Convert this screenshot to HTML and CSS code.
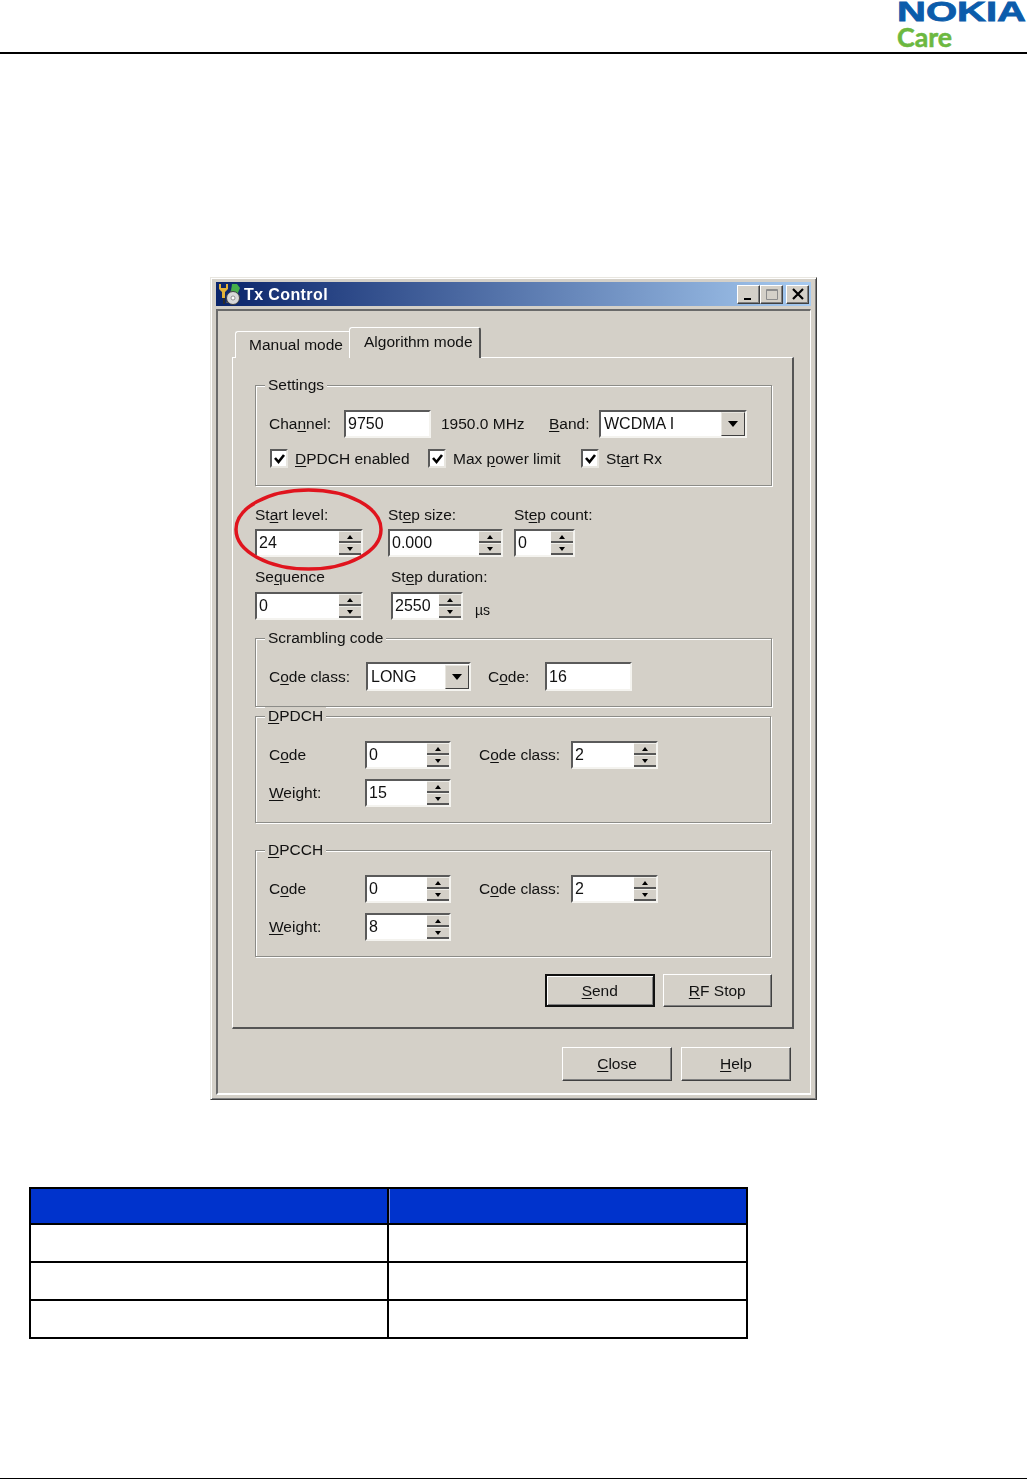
FILE: index.html
```html
<!DOCTYPE html>
<html lang="en">
<head>
    <meta charset="UTF-8">
    <meta name="viewport" content="width=device-width, initial-scale=1.0">
    <title>Tx Control</title>
    <link rel="stylesheet" href="styles.css">
</head>
<body>
    <header class="top">
        <svg class="logo" width="129" height="50" viewBox="0 0 129 50">
            <text class="logo-nokia" x="0" y="21" textLength="129" lengthAdjust="spacingAndGlyphs">NOKIA</text>
            <text class="logo-care" x="0" y="47" textLength="55" lengthAdjust="spacingAndGlyphs">Care</text>
        </svg>
    </header>

    <main class="window">
        <div class="titlebar">
            <svg class="app-icon" width="24" height="24" viewBox="0 0 24 24">
                <path d="M8 21L14 5l6 2-3 14z" fill="#5a5a5a"/>
                <path d="M14 2h5l3 4-3 7-6-3z" fill="#46b04a"/>
                <path d="M1 2v5l3 3v6h3v-6l3-3V2H8v4H3V2z" fill="#e2b23a"/>
                <path d="M5 16h2v6H5z" fill="#2c2c2c"/>
                <circle cx="15" cy="16" r="6.500" fill="#d8d8d8" stroke="#404040"/>
                <circle cx="15" cy="16" r="2" fill="#fff" stroke="#707070" stroke-width="0.700"/>
            </svg>
            <span class="title">Tx Control</span>
            <div class="caption-buttons">
                <span class="cap-btn"><svg width="12" height="12" viewBox="0 0 12 12"><path d="M1 10h7v2H1z"/></svg></span>
                <span class="cap-btn cap-max"><svg width="14" height="12" viewBox="0 0 14 12"><path d="M1.5 1.500h11v10h-11zM1.500 2.500h11" fill="none" stroke="#8c8c8c"/></svg></span>
                <span class="cap-btn cap-close"><svg width="12" height="12" viewBox="0 0 12 12"><path d="M1 1l10 10M11 1L1 11" stroke="#000" stroke-width="2.200"/></svg></span>
            </div>
        </div>

        <div class="client">
            <div class="tabs">
                <span class="tab">Manual mode</span>
                <span class="tab tab-active">Algorithm mode</span>
            </div>

            <div class="tab-page">
                <section class="group">
                    <div class="legend">Settings</div>
                    <div class="row row-first">
                        <span class="lbl lbl-channel">Cha<u>n</u>nel:</span>
                        <span class="edit edit-channel"><span class="val">9750</span></span>
                        <span class="lbl lbl-mhz">1950.0 MHz</span>
                        <span class="lbl lbl-band"><u>B</u>and:</span>
                        <span class="edit combo combo-band"><span class="val">WCDMA I</span><span class="drop"></span></span>
                    </div>
                    <div class="checks">
                        <span class="check check-dpdch"><span class="box"><svg width="13" height="12" viewBox="0 0 13 12"><path d="M2 5l3.500 4L11 2" fill="none" stroke="#000" stroke-width="2.600"/></svg></span><span><u>D</u>PDCH enabled</span></span>
                        <span class="check check-power"><span class="box"><svg width="13" height="12" viewBox="0 0 13 12"><path d="M2 5l3.500 4L11 2" fill="none" stroke="#000" stroke-width="2.600"/></svg></span><span>Max <u>p</u>ower limit</span></span>
                        <span class="check"><span class="box"><svg width="13" height="12" viewBox="0 0 13 12"><path d="M2 5l3.500 4L11 2" fill="none" stroke="#000" stroke-width="2.600"/></svg></span><span>St<u>a</u>rt Rx</span></span>
                    </div>
                </section>

                <div class="fields fields-start">
                    <div class="field field-start">
                        <span class="lbl">St<u>a</u>rt level:</span>
                        <div class="edit spin spin-lg"><span class="val">24</span><span class="arrows"><i class="up"></i><i class="down"></i></span></div>
                        <svg class="ring" width="149" height="83" viewBox="0 0 149 83"><ellipse cx="74.500" cy="41.500" rx="72.500" ry="39.500" fill="none" stroke="#e0141e" stroke-width="3.500"/></svg>
                    </div>
                    <div class="field field-size">
                        <span class="lbl">St<u>e</u>p size:</span>
                        <div class="edit spin spin-md"><span class="val">0.000</span><span class="arrows"><i class="up"></i><i class="down"></i></span></div>
                    </div>
                    <div class="field field-count">
                        <span class="lbl">St<u>e</u>p count:</span>
                        <div class="edit spin spin-sm"><span class="val">0</span><span class="arrows"><i class="up"></i><i class="down"></i></span></div>
                    </div>
                </div>

                <div class="fields fields-seq">
                    <div class="field field-seq">
                        <span class="lbl">Se<u>q</u>uence</span>
                        <div class="edit spin spin-lg"><span class="val">0</span><span class="arrows"><i class="up"></i><i class="down"></i></span></div>
                    </div>
                    <div class="field field-dur">
                        <span class="lbl">St<u>e</u>p duration:</span>
                        <div class="edit spin spin-dur"><span class="val">2550</span><span class="arrows"><i class="up"></i><i class="down"></i></span></div>
                    </div>
                    <span class="lbl lbl-unit">µs</span>
                </div>

                <section class="group group-scrambling">
                    <div class="legend">Scrambling code</div>
                    <div class="row row-scrambling">
                        <span class="lbl lbl-class">C<u>o</u>de class:</span>
                        <span class="edit combo combo-class"><span class="val">LONG</span><span class="drop"></span></span>
                        <span class="lbl lbl-code">C<u>o</u>de:</span>
                        <span class="edit edit-channel"><span class="val">16</span></span>
                    </div>
                </section>

                <section class="group group-channel">
                    <div class="legend"><u>D</u>PDCH</div>
                    <div class="channel-grid">
                        <span class="lbl">C<u>o</u>de</span>
                        <div class="edit spin"><span class="val">0</span><span class="arrows"><i class="up"></i><i class="down"></i></span></div>
                        <span class="lbl lbl-cc">C<u>o</u>de class:</span>
                        <div class="edit spin"><span class="val">2</span><span class="arrows"><i class="up"></i><i class="down"></i></span></div>
                        <span class="lbl"><u>W</u>eight:</span>
                        <div class="edit spin"><span class="val">15</span><span class="arrows"><i class="up"></i><i class="down"></i></span></div>
                    </div>
                </section>

                <section class="group group-channel group-dpcch">
                    <div class="legend"><u>D</u>PCCH</div>
                    <div class="channel-grid">
                        <span class="lbl">C<u>o</u>de</span>
                        <div class="edit spin"><span class="val">0</span><span class="arrows"><i class="up"></i><i class="down"></i></span></div>
                        <span class="lbl lbl-cc">C<u>o</u>de class:</span>
                        <div class="edit spin"><span class="val">2</span><span class="arrows"><i class="up"></i><i class="down"></i></span></div>
                        <span class="lbl"><u>W</u>eight:</span>
                        <div class="edit spin"><span class="val">8</span><span class="arrows"><i class="up"></i><i class="down"></i></span></div>
                    </div>
                </section>

                <div class="actions">
                    <span class="btn btn-default"><u>S</u>end</span>
                    <span class="btn"><u>R</u>F Stop</span>
                </div>
            </div>

            <div class="footer-buttons">
                <span class="btn"><u>C</u>lose</span>
                <span class="btn"><u>H</u>elp</span>
            </div>
        </div>
    </main>

    <table class="data">
        <tr class="head"><th></th><th></th></tr>
        <tr><td></td><td></td></tr>
        <tr><td></td><td></td></tr>
        <tr><td></td><td></td></tr>
    </table>

    <footer class="bottom"></footer>
</body>
</html>
```

FILE: styles.css
```css
html, body {
    margin: 0;
    padding: 0;
}
body {
    width: 1027px;
    height: 1479px;
    display: flex;
    flex-direction: column;
    overflow: hidden;
    background: #fff;
    font-family: "Liberation Sans", Arial, sans-serif;
    font-size: 15.5px;
    color: #111;
}
u {
    text-underline-offset: 2px;
}

/* page header */
.top {
    box-sizing: border-box;
    height: 54px;
    flex: none;
    display: flex;
    justify-content: flex-end;
    padding-right: 1px;
    border-bottom: 2px solid #000;
}
.logo {
    overflow: visible;
}
.logo-nokia {
    font-family: "Liberation Sans", Arial, sans-serif;
    font-weight: bold;
    font-size: 28px;
    fill: #0b5cab;
    stroke: #0b5cab;
    stroke-width: 0.8px;
}
.logo-care {
    font-family: Lato, "Open Sans", sans-serif;
    font-weight: bold;
    font-size: 26px;
    fill: #6cb840;
    stroke: #6cb840;
    stroke-width: 0.5px;
}

/* dialog window */
.window {
    box-sizing: border-box;
    flex: none;
    width: 607px;
    height: 823px;
    margin: 223px 0 0 210px;
    padding: 4px 5px 0;
    background: #d4d0c8;
    border: 1px solid;
    border-color: #e8e6e0 #404040 #404040 #e8e6e0;
    box-shadow: inset 1px 1px 0 #fff, inset -1px -1px 0 #808080;
    filter: blur(0.35px);
}
.titlebar {
    height: 24px;
    display: flex;
    align-items: center;
    padding-left: 2px;
    background: linear-gradient(to right, #0a246a, #a6caf0);
}
.app-icon {
    flex: none;
}
.title {
    margin-left: 2px;
    padding-top: 2px;
    color: #fff;
    font-weight: bold;
    font-size: 16px;
    letter-spacing: 0.4px;
}
.caption-buttons {
    margin-left: auto;
    margin-right: 2px;
    display: flex;
}
.cap-btn {
    box-sizing: border-box;
    width: 23px;
    height: 19px;
    display: flex;
    align-items: center;
    justify-content: center;
    background: #d4d0c8;
    border: 1px solid;
    border-color: #fff #404040 #404040 #fff;
    box-shadow: inset -1px -1px 0 #808080;
}
.cap-close {
    margin-left: 3px;
}
.client {
    box-sizing: border-box;
    height: 786px;
    margin-top: 3px;
    padding: 16px 0 0 14px;
    border: 1px solid;
    border-width: 2px 1px 2px 2px;
    border-color: #6a6a6a #fff #fff #6a6a6a;
}

/* tabs */
.tabs {
    height: 31px;
    display: flex;
    align-items: flex-end;
    padding-left: 3px;
    margin-bottom: -1px;
}
.tab {
    box-sizing: border-box;
    height: 27px;
    width: 114px;
    padding: 4px 0 0 13px;
    white-space: nowrap;
    background: #d4d0c8;
    border: solid #fff;
    border-width: 1px 0 0 1px;
    border-radius: 3px 0 0 0;
}
.tab-active {
    position: relative;
    height: 31px;
    width: 132px;
    padding: 5px 0 0 14px;
    border-right: 2px solid #555;
    border-radius: 3px 3px 0 0;
}
.tab-page {
    box-sizing: border-box;
    width: 562px;
    height: 672px;
    padding: 27px 20px 0 22px;
    background: #d4d0c8;
    border: 1px solid;
    border-width: 1px 2px 2px 1px;
    border-color: #fff #555 #555 #fff;
}

/* group boxes */
.group {
    box-sizing: border-box;
    width: 517px;
    padding: 0 13px;
    border: 1px solid #8c8c88;
    box-shadow: 1px 1px 0 #fff, inset 1px 1px 0 #fff;
}
.legend {
    width: fit-content;
    margin: -10px 0 0 -4px;
    padding: 0 3px;
    line-height: 18px;
    background: #d4d0c8;
}
.row {
    display: flex;
    align-items: center;
    height: 28px;
}
.row-first {
    margin-top: 16px;
}
.lbl {
    line-height: 18px;
    white-space: nowrap;
}
.lbl-channel {
    width: 75px;
}
.lbl-mhz {
    width: 108px;
    margin-left: 10px;
}
.lbl-band {
    width: 50px;
}
.checks {
    display: flex;
    align-items: center;
    height: 19px;
    margin: 11px 0 17px;
}
.check {
    display: flex;
    align-items: center;
    gap: 7px;
    white-space: nowrap;
}
.check-dpdch {
    width: 158px;
    margin-left: 1px;
}
.check-power {
    width: 153px;
}
.box {
    box-sizing: border-box;
    flex: none;
    width: 18px;
    height: 19px;
    display: flex;
    align-items: center;
    justify-content: center;
    background: #fff;
    border: 2px solid;
    border-color: #5a5a5a #e8e6e0 #e8e6e0 #5a5a5a;
}

/* sunken edit boxes */
.edit {
    box-sizing: border-box;
    display: flex;
    align-items: center;
    height: 28px;
    flex: none;
    background: #fff;
    border: 2px solid;
    border-color: #5a5a5a #f4f3ef #f4f3ef #5a5a5a;
    font-size: 16px;
}
.val {
    flex: 1;
    padding-left: 2px;
    white-space: nowrap;
}
.combo .val {
    padding-left: 3px;
}
.edit-channel {
    width: 87px;
}
.combo-band {
    width: 148px;
}
.combo-class {
    width: 105px;
}
.drop {
    box-sizing: border-box;
    width: 24px;
    height: 24px;
    flex: none;
    display: flex;
    align-items: center;
    justify-content: center;
    background: #d4d0c8;
    border: 1px solid;
    border-color: #e8e6e0 #404040 #404040 #e8e6e0;
}
.drop::after {
    content: "";
    border: 5px solid transparent;
    border-top: 6px solid #000;
    border-bottom: 0;
}

/* spin boxes */
.spin {
    width: 86px;
}
.spin-lg {
    width: 108px;
}
.spin-md {
    width: 115px;
}
.spin-sm {
    width: 61px;
}
.spin-dur {
    width: 72px;
}
.arrows {
    width: 22px;
    height: 24px;
    flex: none;
    display: flex;
    flex-direction: column;
}
.arrows i {
    box-sizing: border-box;
    flex: 1;
    display: flex;
    align-items: center;
    justify-content: center;
    background: #d4d0c8;
    border-top: 1px solid #efeee9;
    border-bottom: 2px solid #555;
}
.up::after,
.down::after {
    content: "";
    border: 3px solid transparent;
}
.up::after {
    border-top: 0;
    border-bottom: 4px solid #000;
}
.down::after {
    border-bottom: 0;
    border-top: 4px solid #000;
}

/* free standing fields */
.fields {
    display: flex;
    align-items: flex-end;
}
.fields-start {
    margin-top: 20px;
}
.fields-seq {
    margin-top: 11px;
}
.field {
    display: flex;
    flex-direction: column;
    gap: 5px;
}
.field-start {
    position: relative;
}
.ring {
    position: absolute;
    left: -21px;
    top: -18px;
}
.field-size {
    margin-left: 25px;
}
.field-count {
    margin-left: 11px;
}
.fields-seq .field {
    gap: 6px;
}
.field-dur {
    width: 72px;
    margin-left: 28px;
}
.lbl-unit {
    margin: 0 0 1px 12px;
    font-size: 14px;
}
.group-scrambling {
    margin-top: 18px;
}
.row-scrambling {
    height: 29px;
    margin: 15px 0;
}
.row-scrambling .edit {
    height: 29px;
}
.lbl-class {
    width: 97px;
}
.lbl-code {
    width: 57px;
    margin-left: 17px;
}
.group-channel {
    width: 516px;
    margin-top: 9px;
}
.group-dpcch {
    margin-top: 27px;
}
.channel-grid {
    display: grid;
    grid-template-columns: 96px 86px 92px 87px;
    row-gap: 10px;
    align-items: center;
    margin: 16px 0 15px;
}
.lbl-cc {
    margin-left: 28px;
}
.channel-grid .lbl-cc + .spin {
    margin-left: 28px;
    width: 87px;
}

/* push buttons */
.btn {
    box-sizing: border-box;
    width: 110px;
    height: 34px;
    display: flex;
    align-items: center;
    justify-content: center;
    background: #d4d0c8;
    border: 1px solid;
    border-color: #fff #404040 #404040 #fff;
    box-shadow: inset -1px -1px 0 #808080;
    white-space: pre;
}
.btn-default {
    border: 2px solid #111;
    box-shadow: inset 1px 1px 0 #fff, inset -1px -1px 0 #808080;
}
.actions {
    display: flex;
    gap: 8px;
    margin-top: 17px;
    padding-left: 290px;
}
.actions .btn {
    height: 33px;
}
.footer-buttons {
    display: flex;
    gap: 9px;
    margin-top: 18px;
    margin-left: 330px;
}

/* empty table under the dialog */
.data {
    flex: none;
    width: 719px;
    margin: 87px 0 0 29px;
    border-collapse: collapse;
    table-layout: fixed;
}
.data th,
.data td {
    padding: 0;
    height: 36px;
    border: 2px solid #000;
}
.data .head th {
    height: 34px;
    background: #0033cc;
}
.data .head th:first-child {
    width: 356px;
}
.data .head th + th {
    box-shadow: inset 1px 0 0 #7f8fd8;
}

.bottom {
    margin-top: auto;
    height: 1px;
    background: #000;
}
```
